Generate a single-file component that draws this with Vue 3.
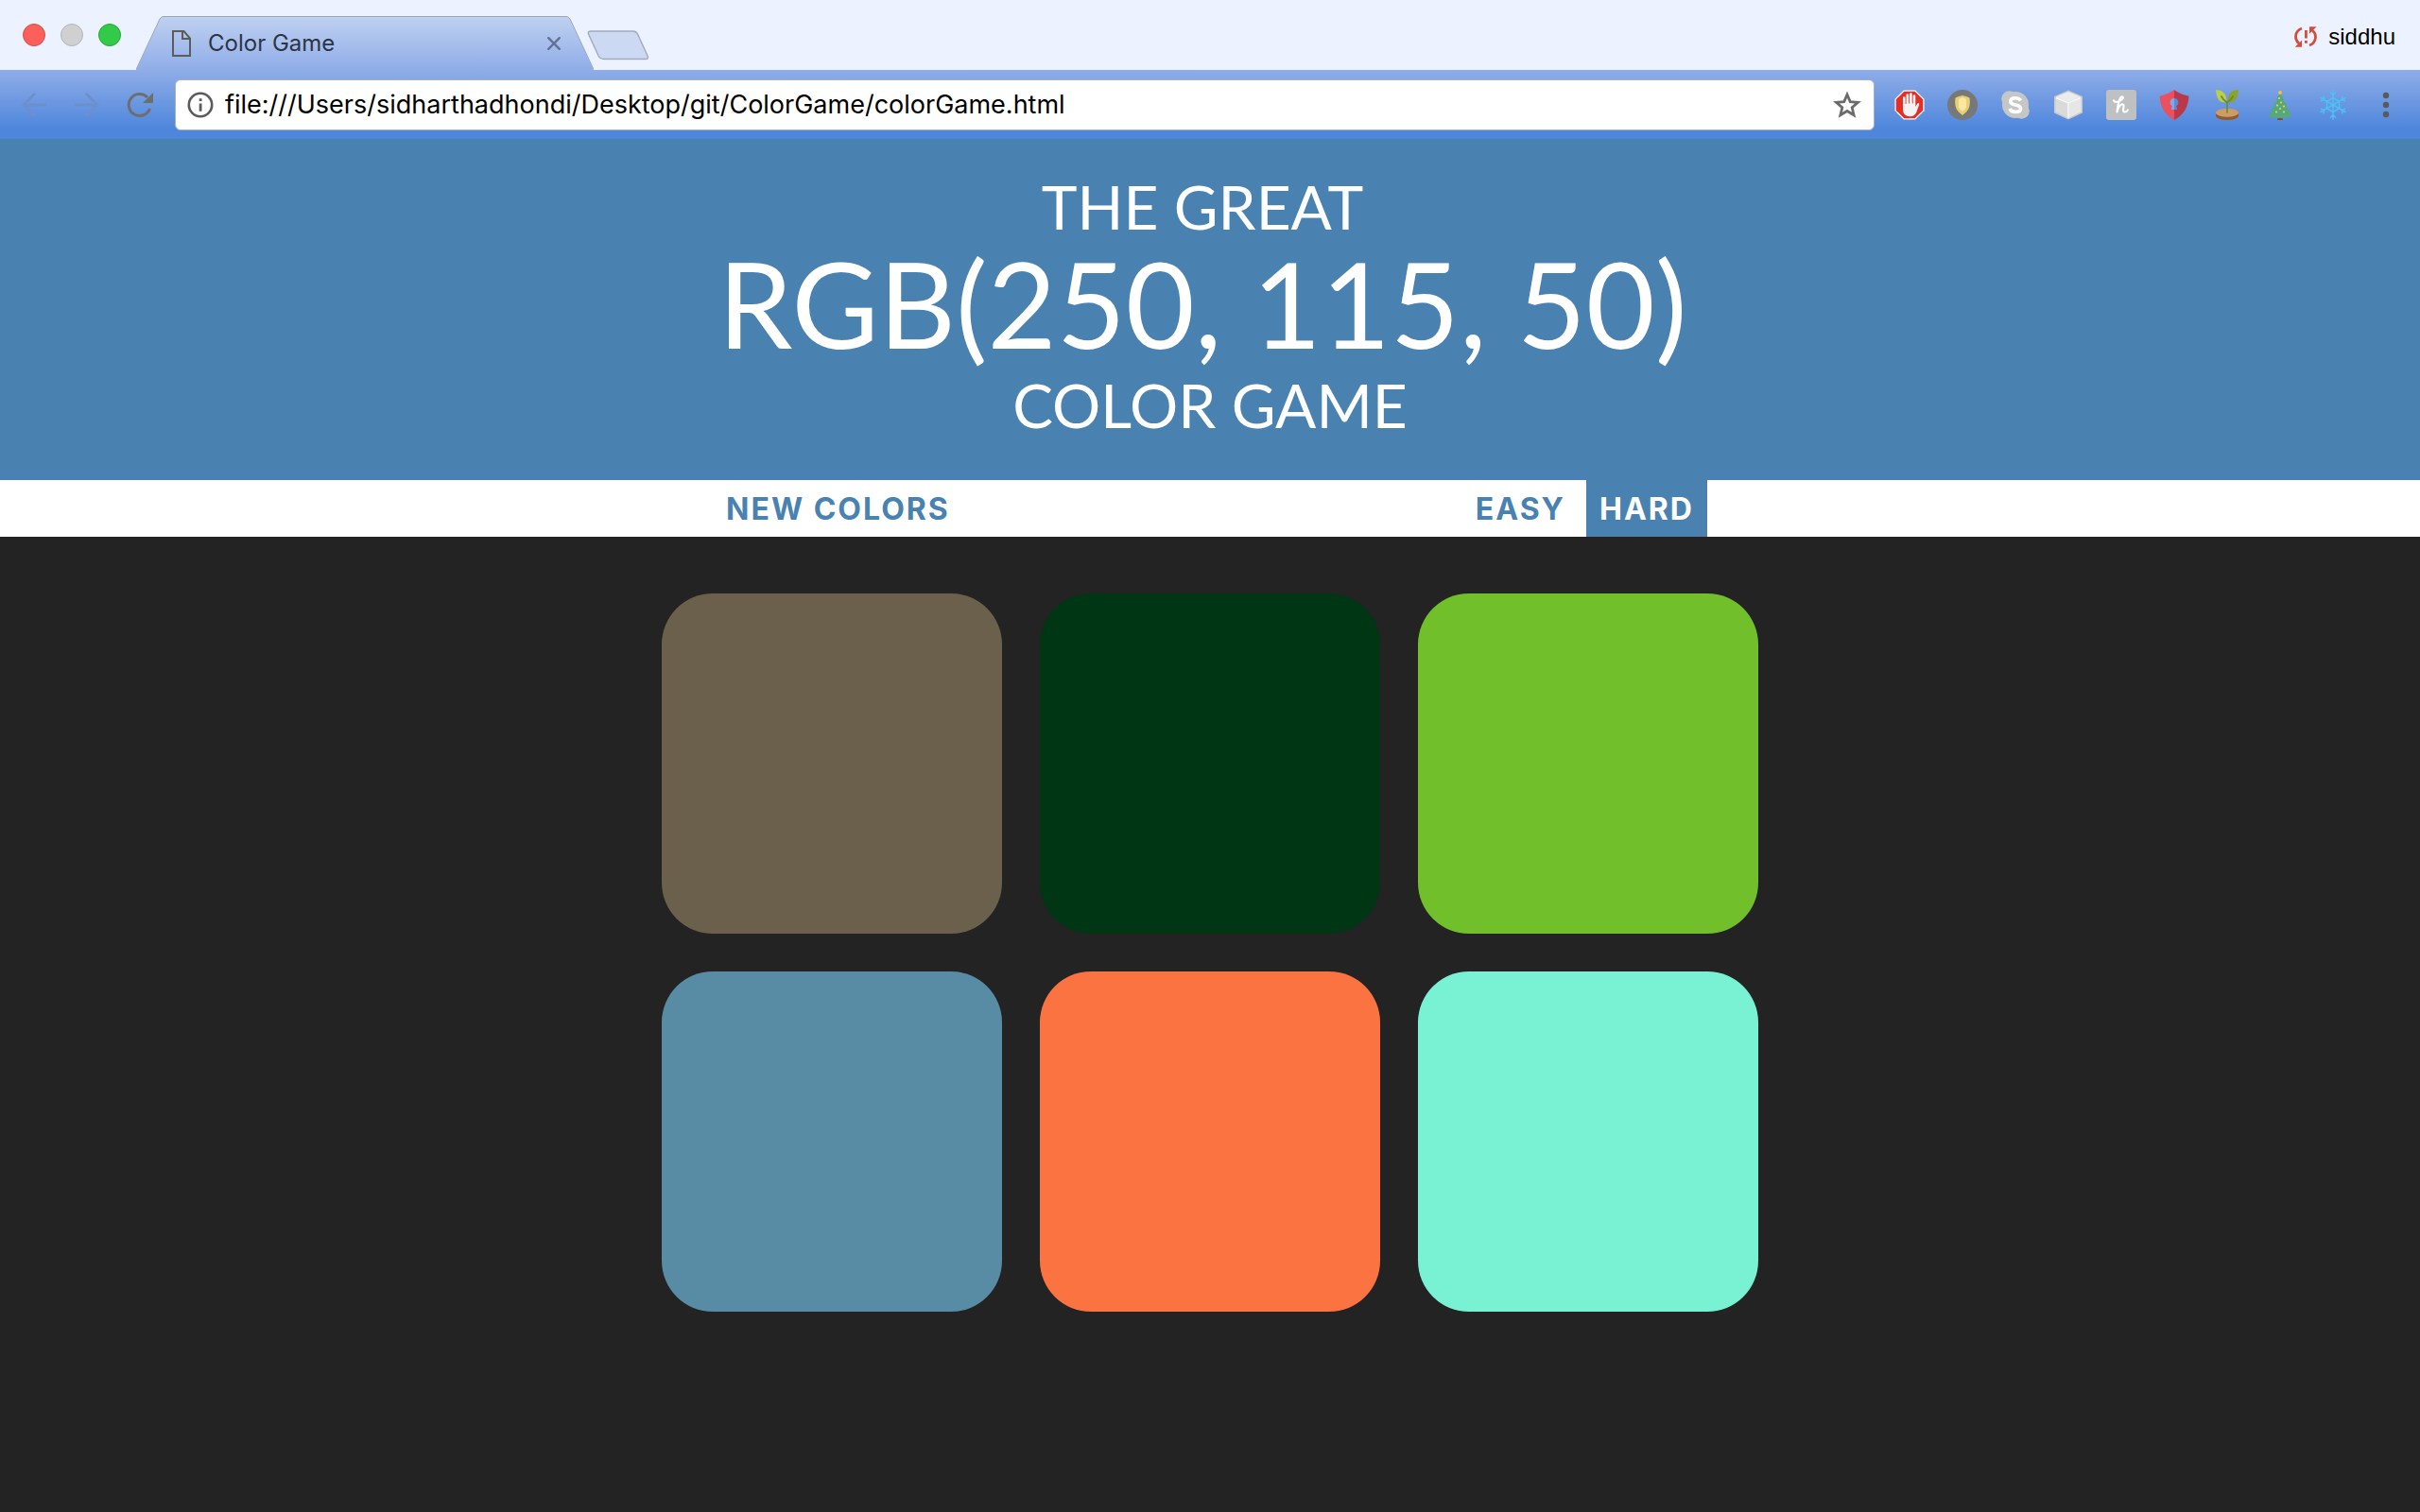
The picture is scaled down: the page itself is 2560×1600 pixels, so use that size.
<script setup>
import { ref } from 'vue'

const address = ref('file:///Users/sidharthadhondi/Desktop/git/ColorGame/colorGame.html')
const target = 'RGB(250, 115, 50)'
const mode = ref('hard')
const colors = ['#6b604c', '#003613', '#71bf2b', '#588ca5', '#fa7340', '#79f2d4']
const arms = [0, 60, 120, 180, 240, 300]
const baubles = [[15, 9], [17, 13.5], [13, 16.5], [20, 17.5], [16, 20], [12, 23.5], [20, 23.5]]
</script>

<template>
  <div class="window">
    <div class="titlebar">
      <div class="lights">
        <button class="light close" aria-label="Close window"></button>
        <button class="light minimize" aria-label="Minimize window"></button>
        <button class="light zoom" aria-label="Zoom window"></button>
      </div>
      <div class="tab">
        <svg class="tab-shape" viewBox="0 0 484 57" aria-hidden="true">
          <defs>
            <linearGradient id="tabFill" x1="0" y1="0" x2="0" y2="1">
              <stop offset="0" stop-color="#bfd1f1" />
              <stop offset="1" stop-color="#8fade8" />
            </linearGradient>
          </defs>
          <path d="M0 57 L25 3 Q26.500 .5 29 .5 H455 Q457.500 .5 459 3 L484 57 Z" fill="url(#tabFill)" />
          <path d="M0 56.500 L25 3 Q26.500 .5 29 .5 H455 Q457.500 .5 459 3 L484 56.500" fill="none" stroke="#9aa6bd" />
        </svg>
        <svg class="tab-page" width="20" height="28" viewBox="0 0 20 28" fill="none" stroke="#5c5c5c" stroke-width="2" aria-hidden="true">
          <path d="M1 1 H12.500 L19 8.500 V27 H1 Z" />
          <path d="M11 1 V9 H19" />
        </svg>
        <span class="tab-title">Color Game</span>
        <button class="tab-close" aria-label="Close tab">
          <svg width="14" height="14" viewBox="0 0 14 14" stroke="#64728f" stroke-width="2.400" stroke-linecap="round"><path d="M1.200 1.200 L12.800 12.800 M12.800 1.200 L1.200 12.800" /></svg>
        </button>
      </div>
      <button class="new-tab" aria-label="New tab">
        <svg width="66" height="32" viewBox="0 0 66 32">
          <path d="M4 1 H49 Q52 1 53.500 4 L64 27 Q65.500 30.500 62 30.500 H18 Q14 30.500 12 27 L1.500 4 Q.5 1 4 1 Z" fill="#cdd9f2" stroke="#a0aabd" stroke-width="1.400" />
        </svg>
      </button>
      <button class="profile">
        <svg width="24" height="22" viewBox="0 0 24 22" aria-hidden="true">
          <g fill="none" stroke="#d04f3b" stroke-width="2.800">
            <path d="M8 2 C0 5 0 14 5 18" />
            <path d="M16 20 C24 17 24 8 19 4" />
          </g>
          <path d="M.8 21.800 H8 V14.500 Z M23.600 .2 H16 V7.800 Z M11 4 h2.800 v8.500 h-2.800 Z M11 15 h2.800 v2.800 h-2.800 Z" fill="#d04f3b" />
        </svg>
        <span>siddhu</span>
      </button>
    </div>

    <div class="toolbar">
      <div class="tools">
        <button aria-label="Back">
          <svg viewBox="0 0 32 32" fill="none" stroke="#6d90cc" stroke-width="2.800"><path d="M29 16 H5 M17 4 L5 16 L17 28" /></svg>
        </button>
        <button aria-label="Forward">
          <svg viewBox="0 0 32 32" fill="none" stroke="#6d90cc" stroke-width="2.800"><path d="M3 16 H27 M15 4 L27 16 L15 28" /></svg>
        </button>
        <button aria-label="Reload">
          <svg viewBox="0 0 32 32">
            <path d="M26.500 20 A11.500 11.500 0 1 1 24 8" fill="none" stroke="#6e6e6e" stroke-width="3" />
            <path d="M30 3 V14 H19 Z" fill="#6e6e6e" />
          </svg>
        </button>
      </div>

      <div class="omnibox">
        <svg width="28" height="28" viewBox="0 0 28 28" aria-hidden="true">
          <circle cx="14" cy="14" r="12.200" fill="none" stroke="#5a5a5a" stroke-width="2.600" />
          <path d="M12.700 7.300 h2.800 v2.800 h-2.800 Z M12.700 12.400 h2.800 v8.300 h-2.800 Z" fill="#5a5a5a" />
        </svg>
        <input v-model="address" type="text" aria-label="Address" spellcheck="false" />
        <button aria-label="Bookmark this page">
          <svg width="30" height="30" viewBox="0 0 30 30" fill="none" stroke="#6b6b6b" stroke-width="2.800">
            <path d="M15 4 L18.200 11.600 L26.500 12.300 L20.200 17.700 L22.100 25.800 L15 21.500 L7.900 25.800 L9.800 17.700 L3.500 12.300 L11.800 11.600 Z" />
          </svg>
        </button>
      </div>

      <div class="tools">
        <button aria-label="Ad blocker">
          <svg viewBox="0 0 32 32">
            <path d="M9.800 .5 H22.200 L31.500 9.800 V22.200 L22.200 31.500 H9.800 L.5 22.200 V9.800 Z" fill="#fff" />
            <path d="M10.300 1.700 H21.700 L30.300 10.300 V21.700 L21.700 30.300 H10.300 L1.700 21.700 V10.300 Z" fill="#e22f28" />
            <path d="M9 18 V8.500 a1.200 1.200 0 0 1 2.600 0 V15 h.9 V5.500 a1.300 1.300 0 0 1 2.700 0 V14.500 h.9 V4.500 a1.300 1.300 0 0 1 2.700 0 V14.500 h.9 V6.500 a1.200 1.200 0 0 1 2.600 0 V18 L24 15 q1 -1.500 2 -.8 q.6 .5 0 2 L23.200 24 Q21 28.300 16.500 28.300 Q9 28.300 9 20.500 Z" fill="#f3f3f3" />
          </svg>
        </button>
        <button aria-label="Gold shield">
          <svg viewBox="0 0 32 32">
            <circle cx="16" cy="16" r="16" fill="#777879" />
            <path d="M16 6 Q20 6.500 23.500 8.500 Q25 18 20.500 23 L16 27 L11.500 23 Q7 18 8.500 8.500 Q12 6.500 16 6 Z" fill="#e8cf74" />
            <path d="M16 8 L20 10 V19 L16 23 L12 19 V10 Z" fill="#f8e8a0" />
          </svg>
        </button>
        <button aria-label="Skype">
          <svg viewBox="0 0 32 32">
            <g fill="#c6c6c6"><circle cx="16" cy="16" r="14" /><circle cx="9.500" cy="9.500" r="8.300" /><circle cx="22.500" cy="22.500" r="8.300" /></g>
            <path d="M21.500 11.500 Q20 8.700 16 8.700 Q10.800 8.700 10.800 12.200 Q10.800 15 16 15.900 Q21.600 16.900 21.600 19.900 Q21.600 23.400 16 23.400 Q11.300 23.400 10 20" fill="none" stroke="#fff" stroke-width="3.600" />
          </svg>
        </button>
        <button aria-label="Cube">
          <svg viewBox="0 0 32 32">
            <path d="M16 .5 L31 7 V24.500 L16 31.500 L1 24.500 V7 Z" fill="#c9c9c9" />
            <path d="M16 2 L29 7.500 L16 13 L3 7.500 Z" fill="#ececec" />
            <path d="M2.500 9 L15 14.500 V29.500 L2.500 23.500 Z" fill="#dadada" />
            <path d="M29.500 9 L17 14.500 V29.500 L29.500 23.500 Z" fill="#e6e6e6" />
            <path d="M3 8.500 L16 14 L29 8.500 M16 14 V30" fill="none" stroke="#fafafa" stroke-width="1.600" />
          </svg>
        </button>
        <button aria-label="Honey">
          <svg viewBox="0 0 32 32">
            <rect width="32" height="32" rx="3" fill="#bfc0c2" />
            <path d="M8 11.500 Q9 13.500 12.500 12.500 Q17.800 10.500 17.800 8.300 Q17.300 6.500 15.500 8 Q13 11 11.500 23.500 Q13.500 15.500 17 15.300 Q19.300 15.300 18.300 19 Q17.300 23.500 19.800 23.500 Q21.500 23.500 22.800 21.500" fill="none" stroke="#fff" stroke-width="2.200" stroke-linecap="round" stroke-linejoin="round" />
          </svg>
        </button>
        <button aria-label="Password shield">
          <svg viewBox="0 0 32 32">
            <path d="M16 .3 Q8 5.500 .5 6.800 Q1.500 24.500 16 32 Z" fill="#ec4f5e" />
            <path d="M16 .3 Q24 5.500 31.500 6.800 Q30.500 24.500 16 32 Z" fill="#bc3747" />
            <path d="M16 9 a4.300 4.300 0 0 0 -2.200 8 L12.800 21 H16 Z" fill="#82a8e8" />
            <path d="M16 9 a4.300 4.300 0 0 1 2.200 8 L19.200 21 H16 Z" fill="#5a8cdc" />
          </svg>
        </button>
        <button aria-label="Seedling">
          <svg viewBox="0 0 32 32">
            <path d="M4 24.500 V28 Q6 32 16 32 Q26 32 28 28 V24.500 Z" fill="#93582b" />
            <ellipse cx="16" cy="24.300" rx="12" ry="4.500" fill="#cb9c64" />
            <path d="M4 .3 Q15.500 0 15.500 13 Q5 15.500 4 .3 Z" fill="#bbce4c" />
            <path d="M28 .3 Q16.500 0 16.500 13 Q27 15.500 28 .3 Z" fill="#8aa32f" />
            <path d="M9.500 6.500 Q12 11 16 13.500 Q20 11 22.500 6.500 M16 13 V24.500" fill="none" stroke="#6e8a2a" stroke-width="1.600" />
          </svg>
        </button>
        <button aria-label="Fir tree">
          <svg viewBox="0 0 32 32">
            <path d="M14.300 27 H17.700 V30.500 H19 V32 H13 V30.500 H14.300 Z" fill="#8a4a35" />
            <path d="M16 3 L20 10.500 L19 11 L23 16 L21.500 16.500 L26 21.500 L24.500 22.200 L29 28 Q16 32 3 28 L7.500 22.200 L6 21.500 L10.500 16.500 L9 16 L13 11 L12 10.500 Z" fill="#57a87a" />
            <circle cx="16" cy="3" r="1.900" fill="#f4c33d" />
            <circle v-for="b in baubles" :key="b.join()" :cx="b[0]" :cy="b[1]" r="1.100" fill="#ecd14c" />
          </svg>
        </button>
        <button aria-label="Snowflake">
          <svg viewBox="0 0 32 32" fill="none" stroke="#4ec0f4" stroke-width="1.500">
            <path v-for="a in arms" :key="a" :transform="`rotate(${a} 16 16)`" d="M16 16 V.2 M13 2.500 L16 5.500 L19 2.500 M16 8.500 L22.500 12.200" />
          </svg>
        </button>
        <button aria-label="Menu">
          <svg viewBox="0 0 32 32" fill="#5a5a5a"><circle cx="16" cy="6" r="3.200" /><circle cx="16" cy="16" r="3.200" /><circle cx="16" cy="26" r="3.200" /></svg>
        </button>
      </div>
    </div>

    <main>
      <h1>
        <span class="line lead">The Great</span>
        <span class="line target">{{ target }}</span>
        <span class="line">Color Game</span>
      </h1>
      <nav>
        <button>New Colors</button>
        <span class="message"></span>
        <button :class="{ selected: mode === 'easy' }" @click="mode = 'easy'">Easy</button>
        <button :class="{ selected: mode === 'hard' }" @click="mode = 'hard'">Hard</button>
      </nav>
      <div class="board">
        <button v-for="c in colors" :key="c" class="square" :style="{ backgroundColor: c }" :aria-label="c"></button>
      </div>
    </main>
  </div>
</template>

<style>
body {
  background: #232323;
}
</style>

<style scoped>
.window {
  min-height: 100vh;
  font-family: Inter, "Liberation Sans", sans-serif;
}
button {
  margin: 0;
  padding: 0;
  border: 0;
  background: none;
  font: inherit;
  color: inherit;
  cursor: pointer;
}
svg {
  display: block;
}

.titlebar {
  display: flex;
  align-items: center;
  height: 74px;
  padding: 0 26px 0 24px;
  background: #ecf2ff;
}
.lights {
  display: flex;
  gap: 16px;
  margin-right: 16px;
}
.light {
  width: 24px;
  height: 24px;
  border: 1px solid #e2463f;
  border-radius: 50%;
  background: #fd605b;
}
.minimize {
  border-color: #b4b4b4;
  background: #d0d0d0;
}
.zoom {
  border-color: #1fa832;
  background: #33ca49;
}
.tab {
  position: relative;
  z-index: 1;
  display: flex;
  align-items: center;
  align-self: flex-end;
  box-sizing: border-box;
  width: 484px;
  height: 57px;
  padding: 0 35px 0 38px;
}
.tab-shape {
  position: absolute;
  inset: 0;
  width: 100%;
  height: 100%;
}
.tab-page,
.tab-title,
.tab-close {
  position: relative;
}
.tab-title {
  flex: 1;
  margin-left: 18px;
  font-size: 24px;
  color: #2c3445;
}
.new-tab {
  margin: 22px 0 0 -7px;
}
.profile {
  display: flex;
  align-items: center;
  gap: 12px;
  margin: 4px 0 0 auto;
  font: 24px "Liberation Sans", Arial, sans-serif;
  color: #000;
}

.toolbar {
  display: flex;
  align-items: center;
  gap: 21px;
  box-sizing: border-box;
  height: 73px;
  padding: 0 20px;
  background: linear-gradient(#8fade8, #4e86dc 86%);
}
.tools {
  display: flex;
  gap: 24px;
}
.tools svg {
  width: 32px;
  height: 32px;
}
.omnibox {
  display: flex;
  flex: 1;
  align-items: center;
  box-sizing: border-box;
  height: 54px;
  padding: 0 13px 0 12px;
  border: 1px solid #a9b0bd;
  border-radius: 6px;
  background: #fff;
}
.omnibox input {
  flex: 1;
  min-width: 0;
  padding: 0 8px 0 12px;
  border: 0;
  outline: 0;
  background: none;
  font: 27px Inter, "Liberation Sans", sans-serif;
  color: #000;
}

h1 {
  display: flex;
  flex-direction: column;
  align-items: center;
  margin: 0;
  padding: 32px 0 39px;
  background: #4982b1;
  font: 64px/80px Lato, "Open Sans", sans-serif;
  text-transform: uppercase;
  color: #fff;
}
.lead,
.target {
  padding-right: 16px;
}
.target {
  margin-bottom: 6px;
  font-size: 126px;
  line-height: 124px;
}
nav {
  display: flex;
  justify-content: center;
  gap: 8px;
  height: 60px;
  background: #fff;
}
nav button {
  padding: 0 14px;
  font-size: 32px;
  font-weight: 700;
  letter-spacing: 2px;
  text-transform: uppercase;
  color: #4982b1;
}
nav .selected {
  background: #4982b1;
  color: #fff;
}
.message {
  width: 20%;
}
.board {
  display: grid;
  grid-template-columns: repeat(3, 1fr);
  gap: 40px;
  max-width: 1160px;
  margin: 60px auto 0;
}
.square {
  aspect-ratio: 1;
  border-radius: 15%;
}
</style>
